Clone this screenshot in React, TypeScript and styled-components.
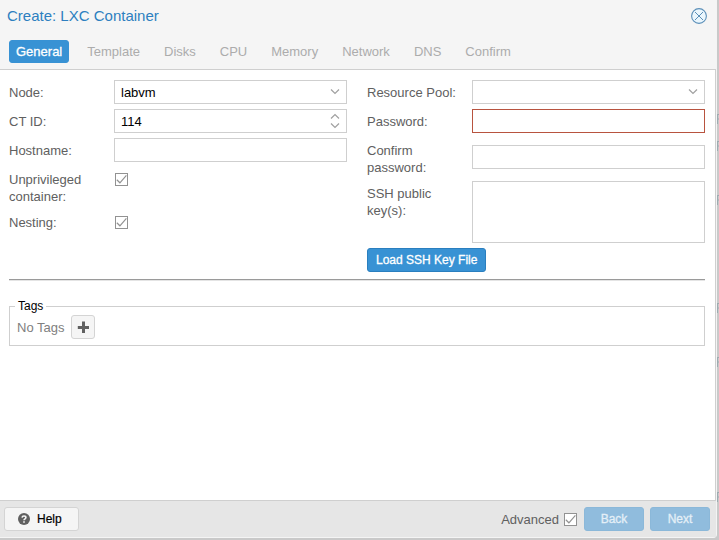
import React from "react";
import styled, { createGlobalStyle } from "styled-components";

const GlobalStyle = createGlobalStyle`
  *, *::before, *::after { box-sizing: border-box; }
  body {
    margin: 0;
    background: #c9c9c9;
    font-family: "Liberation Sans", Arial, sans-serif;
    font-size: 13px;
    line-height: 17px;
    color: #606060;
  }
  button, input, select, textarea { font: inherit; }
`;

const Screen = styled.div`
  position: relative;
  display: flex;
  min-height: 100vh;
  padding: 0 2px 2px 0;
`;

const Window = styled.section`
  flex: 1;
  min-width: 0;
  display: flex;
  flex-direction: column;
  background: #f5f5f5;
  border: solid #f4f4f4;
  border-width: 0 1px 1px 0;
  border-radius: 0 0 4px 0;
`;

const Backdrop = styled.svg`
  position: absolute;
  top: 0;
  right: 0;
  width: 2px;
  height: 540px;
`;

const TitleBar = styled.header`
  display: flex;
  align-items: center;
  justify-content: space-between;
  height: 32px;
  padding: 0 9px 0 7px;
`;

const Title = styled.h1`
  margin: 0;
  font-size: 15px;
  line-height: 20px;
  font-weight: 400;
  color: #2d7fc0;
`;

const CloseButton = styled.button`
  display: flex;
  padding: 0;
  border: 0;
  background: none;
`;

const TabBar = styled.nav`
  display: flex;
  gap: 12px;
  padding: 8px 9px 6px;
`;

const Tab = styled.button<{ $active?: boolean }>`
  height: 23px;
  padding: 0 ${(p) => (p.$active ? "6px" : "5px")};
  border: 1px solid ${(p) => (p.$active ? "#3892d4" : "transparent")};
  border-radius: 3px;
  background: ${(p) => (p.$active ? "#3892d4" : "transparent")};
  color: ${(p) => (p.$active ? "#fff" : "#acacac")};
  -webkit-text-stroke: ${(p) => (p.$active ? "0.3px #fff" : "0")};
`;

const Body = styled.main`
  flex: 1;
  padding: 10px;
  padding-left: 9px;
  border: solid #cfcfcf;
  border-width: 1px 1px 1px 0;
  background: #fff;
`;

const Columns = styled.div`
  display: grid;
  grid-template-columns: 1fr 1fr;
  gap: 20px;
`;

const Column = styled.div`
  display: flex;
  flex-direction: column;
  align-items: stretch;
  gap: 5px;
`;

const Field = styled.div<{ $top?: boolean }>`
  display: grid;
  grid-template-columns: 100px 1fr;
  column-gap: 5px;
  align-items: ${(p) => (p.$top ? "start" : "center")};
  min-height: 24px;
`;

const Label = styled.label`
  padding-top: 4px;
  align-self: start;
`;

const Control = styled.div`
  position: relative;
  display: flex;
`;

const Input = styled.input<{ $invalid?: boolean }>`
  width: 100%;
  height: 24px;
  padding: 0 6px;
  border: 1px solid ${(p) => (p.$invalid ? "#b8533f" : "#cfcfcf")};
  border-radius: 0;
  background: #fff;
  color: #000;
  outline: none;
  appearance: textfield;
  &::-webkit-inner-spin-button { appearance: none; }
`;

const Select = styled.select`
  width: 100%;
  height: 24px;
  padding: 0 24px 0 6px;
  border: 1px solid #cfcfcf;
  border-radius: 0;
  background: #fff;
  color: #000;
  appearance: none;
`;

const TextArea = styled.textarea`
  display: block;
  width: 100%;
  height: 62px;
  padding: 4px 6px;
  border: 1px solid #cfcfcf;
  resize: none;
`;

const Trigger = styled.svg`
  position: absolute;
  top: 0;
  right: 0;
  width: 24px;
  height: 24px;
  fill: none;
  stroke: #a0a0a0;
  stroke-width: 1.2;
  pointer-events: none;
`;

const CheckWrap = styled.span`
  position: relative;
  display: inline-flex;
`;

const CheckInput = styled.input`
  appearance: none;
  width: 13px;
  height: 13px;
  margin: 0;
  border: 1px solid #929292;
  background: #fff;
  &:not(:checked) + svg { display: none; }
`;

const CheckMark = styled.svg`
  position: absolute;
  inset: 0;
  width: 13px;
  height: 13px;
  fill: none;
  stroke: #929292;
  stroke-width: 1.2;
  pointer-events: none;
`;

const CheckCell = styled.div`
  display: flex;
  align-self: start;
  padding: 6px 1px;
`;

const Button = styled.button<{ $kind?: "primary" | "disabled" }>`
  display: inline-flex;
  align-items: center;
  justify-content: center;
  gap: 7px;
  height: 24px;
  padding: 0 8px;
  border: 1px solid
    ${(p) => (p.$kind === "primary" ? "#2a7fbf" : p.$kind === "disabled" ? "#8bb8d9" : "#d4d4d4")};
  border-radius: 3px;
  background: ${(p) => (p.$kind === "primary" ? "#3892d4" : p.$kind === "disabled" ? "#90bcdd" : "#f5f5f5")};
  color: ${(p) => (p.$kind === "primary" ? "#fff" : p.$kind === "disabled" ? "#e4eff7" : "#000")};
  -webkit-text-stroke: ${(p) => (p.$kind ? "0.3px" : "0.2px")} currentColor;
  font-size: 12px;
`;

const LoadButton = styled(Button)`
  align-self: flex-start;
`;

const HelpButton = styled(Button)`
  width: 75px;
  padding: 0 13px;
  justify-content: flex-start;
  margin-right: auto;
`;

const WizardButton = styled(Button)`
  width: 60px;
`;

const AddButton = styled(Button)`
  width: 24px;
  padding: 0;
`;

const Divider = styled.hr`
  margin: 7px 0 18px;
  border: solid;
  border-width: 1px 0;
  border-color: #9a9a9a transparent #e4e4e4;
`;

const Tags = styled.fieldset`
  margin: 0;
  padding: 2px 7px 6px;
  border: 1px solid #cfcfcf;
`;

const Legend = styled.legend`
  margin-left: -2px;
  padding: 0 3px;
  font-size: 12px;
  line-height: 14px;
  color: #000;
`;

const TagRow = styled.div`
  display: flex;
  align-items: center;
  gap: 7px;
  color: #808080;
`;

const Footer = styled.footer`
  display: flex;
  align-items: center;
  gap: 6px;
  padding: 6px 6px 6px 4px;
  background: #e6e6e6;
`;

const Advanced = styled.label`
  display: flex;
  align-items: center;
  gap: 5px;
  padding-right: 1px;
`;

function Check({ id }: { id: string }) {
  return (
    <CheckWrap>
      <CheckInput id={id} type="checkbox" defaultChecked />
      <CheckMark viewBox="0 0 13 13" aria-hidden="true">
        <path d="M1.8 6.8 4.9 9.8 11.4 2.4" />
      </CheckMark>
    </CheckWrap>
  );
}

function Chevron() {
  return (
    <Trigger viewBox="0 0 24 24" aria-hidden="true">
      <path d="M8 9.5 12 13.5 16 9.5" />
    </Trigger>
  );
}

const tabs = ["General", "Template", "Disks", "CPU", "Memory", "Network", "DNS", "Confirm"];
const backdropMarks = [119, 146, 200, 308, 362, 497];

export default function App() {
  return (
    <Screen>
      <GlobalStyle />
      <Backdrop viewBox="0 0 2 540" aria-hidden="true">
        {backdropMarks.map((y) => (
          <path key={y} d={`M.5 ${y - 5}v10M0 ${y - 4.5}h2M0 ${y}h2`} stroke="#9eabb1" fill="none" />
        ))}
      </Backdrop>
      <Window aria-label="Create: LXC Container">
        <TitleBar>
          <Title>Create: LXC Container</Title>
          <CloseButton type="button" aria-label="Close">
            <svg width="16" height="16" viewBox="0 0 16 16" fill="none" stroke="#5b8fb8">
              <circle cx="8" cy="8" r="7.4" fill="#eaf6fd" strokeWidth="1.1" />
              <path d="M4 4 12 12M12 4 4 12" strokeWidth="1" />
            </svg>
          </CloseButton>
        </TitleBar>
        <TabBar>
          {tabs.map((t, i) => (
            <Tab key={t} type="button" $active={i === 0} disabled={i !== 0}>
              {t}
            </Tab>
          ))}
        </TabBar>
        <Body>
          <Columns>
            <Column>
              <Field>
                <Label htmlFor="node">Node:</Label>
                <Control>
                  <Select id="node" defaultValue="labvm">
                    <option>labvm</option>
                  </Select>
                  <Chevron />
                </Control>
              </Field>
              <Field>
                <Label htmlFor="ctid">CT ID:</Label>
                <Control>
                  <Input id="ctid" type="number" defaultValue={114} />
                  <Trigger viewBox="0 0 24 24" aria-hidden="true">
                    <path d="M8 9.5 12 5.5 16 9.5M8 14.5 12 18.5 16 14.5" />
                  </Trigger>
                </Control>
              </Field>
              <Field>
                <Label htmlFor="hostname">Hostname:</Label>
                <Input id="hostname" type="text" />
              </Field>
              <Field>
                <Label htmlFor="unprivileged">Unprivileged container:</Label>
                <CheckCell>
                  <Check id="unprivileged" />
                </CheckCell>
              </Field>
              <Field>
                <Label htmlFor="nesting">Nesting:</Label>
                <CheckCell>
                  <Check id="nesting" />
                </CheckCell>
              </Field>
            </Column>
            <Column>
              <Field>
                <Label htmlFor="pool">Resource Pool:</Label>
                <Control>
                  <Select id="pool" defaultValue="">
                    <option value="" />
                  </Select>
                  <Chevron />
                </Control>
              </Field>
              <Field>
                <Label htmlFor="password">Password:</Label>
                <Input id="password" type="password" $invalid aria-invalid="true" />
              </Field>
              <Field>
                <Label htmlFor="confirm">Confirm password:</Label>
                <Input id="confirm" type="password" />
              </Field>
              <Field $top>
                <Label htmlFor="ssh">SSH public key(s):</Label>
                <TextArea id="ssh" />
              </Field>
              <LoadButton type="button" $kind="primary">
                Load SSH Key File
              </LoadButton>
            </Column>
          </Columns>
          <Divider />
          <Tags>
            <Legend>Tags</Legend>
            <TagRow>
              <span>No Tags</span>
              <AddButton type="button" aria-label="Add tag">
                <svg width="12" height="12" viewBox="0 0 12 12" fill="#606060">
                  <path d="M5 .5h3V5h4v3H8v4H5V8H.8V5H5z" />
                </svg>
              </AddButton>
            </TagRow>
          </Tags>
        </Body>
        <Footer>
          <HelpButton type="button">
            <svg width="12" height="12" viewBox="0 0 12 12" fill="none" aria-hidden="true">
              <circle cx="6" cy="6" r="6" fill="#606060" />
              <path d="M4.1 4.6C4.2 2.4 7.9 2.5 7.9 4.6 7.9 5.8 6 5.8 6 7.3M6 8.2v1.6" stroke="#f5f5f5" strokeWidth="1.6" />
            </svg>
            Help
          </HelpButton>
          <Advanced htmlFor="advanced">
            Advanced
            <Check id="advanced" />
          </Advanced>
          <WizardButton type="button" $kind="disabled" disabled>
            Back
          </WizardButton>
          <WizardButton type="button" $kind="disabled" disabled>
            Next
          </WizardButton>
        </Footer>
      </Window>
    </Screen>
  );
}
